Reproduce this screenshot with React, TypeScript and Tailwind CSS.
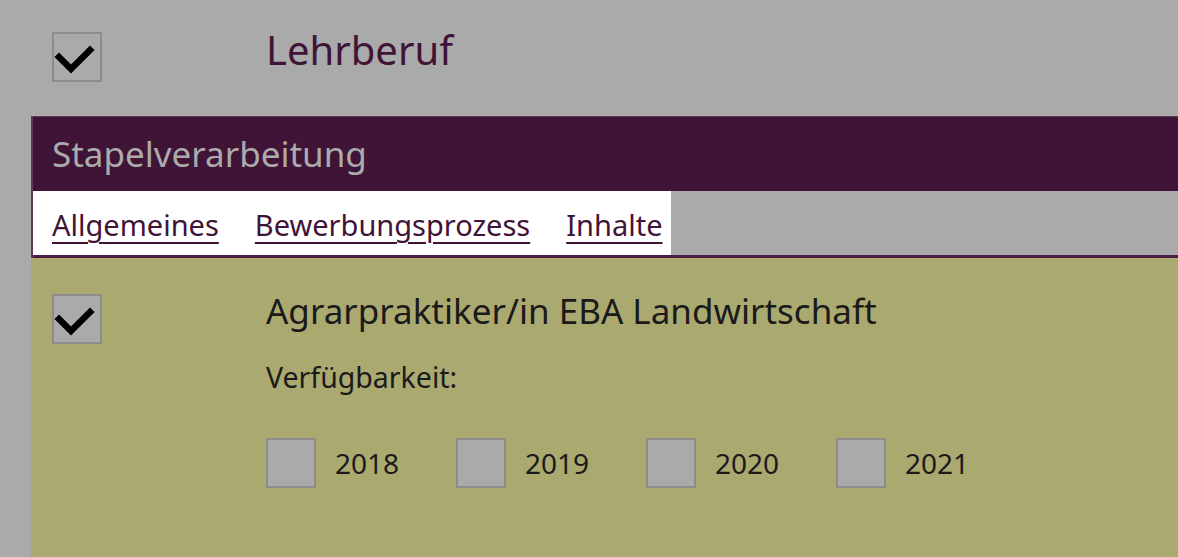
const years = ['2018', '2019', '2020', '2021']

function CheckBox({ checked }: { checked?: boolean }) {
  return (
    <div className="w-[50px] h-[50px] shrink-0 border-2 border-[#8c8c8c] bg-[#aaaaaa] flex items-center justify-center">
      {checked && (
        <svg width="46" height="46" viewBox="0 0 46 46" className="block">
          <polyline points="5,23 17,35 36,16" fill="none" stroke="#000" strokeWidth="6.5" strokeLinecap="square" />
        </svg>
      )}
    </div>
  )
}

const tabClass = 'text-[29px] leading-none text-[#3f1437] underline decoration-2 underline-offset-[6px]'

export default function App() {
  return (
    <div className="w-[1178px] h-[557px] overflow-hidden bg-[#aaaaaa] font-['Noto_Sans',sans-serif]">
      <div className="flex items-start h-[116px] pl-[52px]">
        <div className="mt-[32px]">
          <CheckBox checked />
        </div>
        <div className="ml-[164px] mt-[30px] text-[40px] text-[#3f1437] leading-none">Lehrberuf</div>
      </div>

      <div className="ml-[31px] border-t border-l-2 border-[#5e3a58]">
        <div className="h-[74px] bg-[#3f1437] pl-[19px] pt-[19px]">
          <div className="text-[35px] leading-none text-[#ababab]">Stapelverarbeitung</div>
        </div>
        <div className="flex h-[67px] border-b-[3px] border-[#4a1d44]">
          <div className="bg-white flex items-start gap-[36px] pl-[19px] pr-[8px] pt-[19px]">
            <a href="#" className={tabClass}>Allgemeines</a>
            <a href="#" className={tabClass}>Bewerbungsprozess</a>
            <a href="#" className={tabClass}>Inhalte</a>
          </div>
        </div>
      </div>

      <div className="ml-[31px] h-[300px] bg-[#aaa970] flex items-start pl-[21px]">
        <div className="mt-[36px]">
          <CheckBox checked />
        </div>
        <div className="ml-[164px] pt-[35px] text-[#1a1a1a]">
          <div className="text-[35px] leading-none">Agrarpraktiker/in EBA Landwirtschaft</div>
          <div className="text-[28.5px] mt-[35px] leading-none">Verfügbarkeit:</div>
          <div className="flex mt-[46px]">
            {years.map((y) => (
              <div key={y} className="flex items-center w-[190px]">
                <CheckBox />
                <span className="ml-[19px] text-[28px] leading-none">{y}</span>
              </div>
            ))}
          </div>
        </div>
      </div>
    </div>
  )
}
